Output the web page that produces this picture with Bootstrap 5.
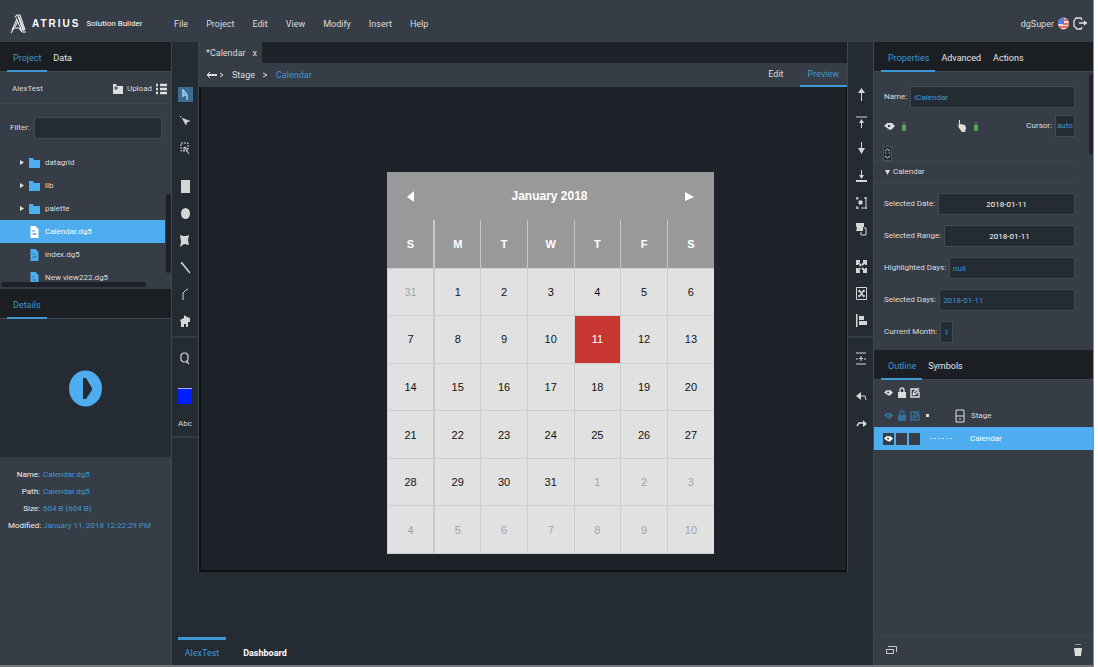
<!DOCTYPE html>
<html lang="en">
<head>
<meta charset="utf-8">
<meta name="viewport" content="width=device-width, initial-scale=1">
<title>Atrius Solution Builder</title>
<link rel="stylesheet" href="https://cdn.jsdelivr.net/npm/bootstrap@5.3.0/dist/css/bootstrap.min.css">
<style>
:root{--panel:#363d46;--deep:#252b32;--black:#1b1e23;--canvas:#1e2229;--line:#3c4853;--blue:#4dadee;--link:#3f97d3;--ink:#dcdcdc}
body{font-family:Roboto,"Open Sans",sans-serif;font-size:9px;line-height:14px;color:var(--ink);background:#fff;height:100vh;overflow:hidden;padding:0 4px 0 0}
a{color:inherit;text-decoration:none}
button{border:0;background:none;color:inherit;padding:0;font:inherit}
svg{display:block;flex:none}
.frame{background:var(--deep);border-right:1px solid #8b9096;border-bottom:2px solid #73777c;height:100vh}
.topbar{height:42px;background:var(--panel);padding:5px 6px 0 10px}
.brand{width:164px}
.menu{gap:18px}
.logotype{font:bold 10px/14px "Liberation Sans",sans-serif;color:#fff;margin:0 6px 0 5px;letter-spacing:2px}
.side-l{width:172px;border-right:1px solid var(--line)}
.side-r{width:220px;border-left:1px solid var(--line);background:var(--panel)}
.tabs{height:30px;background:var(--black);border-bottom:1px solid var(--line);padding-left:7px}
.tabs button{padding:3px 6px 0;border-bottom:2px solid transparent;color:#e6e6e6;margin-bottom:-1px}
.tabs .wide{padding:3px 6px 0 7px}
.tabs .on{color:var(--link);border-color:var(--link)}
.sm8{font-size:8px;line-height:12px}
.grey{background:var(--panel)}
.subhead{height:32px;border-bottom:1px solid var(--line);padding:2px 4px 0 12px}
.filter{padding:13px 9px 12px 10px}
.field{background:var(--deep);border:1px solid #414b56;color:var(--link);height:22px;min-width:0;padding:0 3px;font-size:8px;outline:0;border-radius:0}
.tree{height:138px}
.tree li{height:23px;margin-right:6px;padding-left:19px;gap:5px}
.tree .twisty{width:5px;height:5px}
.tree .sel{background:var(--blue);color:#fff}
.vbar{position:absolute;right:0;top:43px;width:5px;height:79px;border-radius:3px;background:#1d2127}
.hbar{position:absolute;left:1px;bottom:2px;width:145px;height:5px;border-radius:3px;background:#1d2127}
.preview{height:138px;background:var(--deep)}
.meta-list{padding:10px 0 0 8px;background:var(--panel)}
.meta-list dl{display:grid;grid-template-columns:32px 1fr;column-gap:3px;row-gap:1px;margin:0;line-height:16px}
.meta-list dt{text-align:right;font-weight:400;color:#f0f0f0}
.meta-list dd{margin:0;color:var(--link);white-space:nowrap}
.strip{width:26px;padding-top:39px}
.strip-r{border-left:1px solid var(--line)}
.strip button{width:26px;height:27px;display:flex;align-items:center;justify-content:center;color:#d6d6d6}
.strip .group{border-bottom:2px solid #333c45}
.strip .tall{height:40px;padding-top:8px}
.strip .short{height:24px}
.lgroup1{height:92px}.lgroup2{height:165px}
.rgroup1{height:172px}.rgroup2{height:85px}
.group3{padding-top:7px;height:100px}
.picked{background:#3b6c91;width:15px;height:15px;display:flex;align-items:center;justify-content:center}
.swatch{width:14px;height:16px;background:#001eff;border-top:1px solid #a6acff;display:block}
.files{height:21px;background:var(--canvas)}
.files button{padding:0 5px 0 7px;background:var(--panel);gap:7px}
.crumbs{height:24px;background:var(--panel);padding-left:7px}
.crumbs nav{gap:8px}
.crumbs nav .here{color:var(--link)}
.crumbs .mode{padding:0 8px;height:24px;border-bottom:2px solid transparent}
.crumbs .on{color:var(--link);border-color:var(--link)}
.stage{background:var(--canvas);border:solid #0d0f12;border-width:0 1px 2px 2px;padding:85px 0 0 186px}
.main-col{border-left:1px solid var(--line)}
.cal{width:327px;font:12px/16px "Liberation Sans",sans-serif;background:#999}
.cal-title{height:48px;color:#fff;font-weight:bold;padding:0 20px}
.cal table{width:100%;height:334px;table-layout:fixed;border-collapse:collapse;text-align:center;color:#111;font-size:11px}
.cal th{height:48px;color:#fff;border-left:1px solid #c6c6c6;vertical-align:middle;font-weight:bold}
.cal th:first-child{border-left:0}
.cal td{background:#e1e1e1;border:1px solid #cecece;border-width:1px 0 1px 1px;padding:0}
.cal th:nth-child(2),.cal td:nth-child(2){border-left:2px solid #cacaca}
.cal td.out{color:#a3a3a3}
.cal td.today{background:#c83732;color:#fff}
.dock{height:93px;padding-left:6px}
.dock button{min-width:48px;height:28px;border-top:3px solid transparent;color:#fff}
.dock .on{border-color:var(--link);color:var(--link)}
.dock .other{font-weight:bold;margin-left:15px}
.props{height:278px;overflow:hidden;font-size:8px;padding:9px 18px 0 0}
.props .prow{height:32px;padding-left:10px;gap:3px}
.props .flags{height:26px}
.props .step{height:22px}
.props .month{width:13px}
.props .sect{height:22px;border:solid var(--line);border-width:1px 0;padding-left:11px;font-size:8px;gap:3px;margin-bottom:5px}
.props .thumb{position:absolute;right:0;top:2px;width:4px;height:81px;border-radius:3px;background:#20252b}
.led{width:4px;height:9px;background:#5da54c;border-top:3px solid #4a5357}
.autosel{appearance:none;width:20px;padding:0 1px}
.spin{width:9px;height:15px;background:var(--deep);border:1px solid #48525b;margin:7px 0 0 9px;justify-content:center}
.outline{padding-top:1px}
.orow{height:23px;padding-left:9px;gap:2px}
.orow.sel{background:var(--blue);color:#fff}
.cellbox{width:11px;height:12px;background:var(--panel);display:flex;align-items:center;justify-content:center}
.dim{color:#356f9b}
.foot{height:29px;border-top:1px solid var(--line);padding:0 11px 3px 12px}
</style>
</head>
<body>
<svg width="0" height="0" class="position-absolute" aria-hidden="true">
<symbol id="eye" viewBox="0 0 11 9"><path d="M0 4 3 1h5l3 3-3 3-2 1-3-2z" fill="currentColor"/><path d="M4 3h2v2H4z" fill="#363d46"/></symbol>
<symbol id="lock" viewBox="0 0 8 12"><path d="M2 6V3q0-2 2-2t2 2v3" fill="none" stroke="currentColor" stroke-width="1.3"/><path d="M0 5h8v6H0z" fill="currentColor"/></symbol>
<symbol id="pen" viewBox="0 0 10 11"><path d="M7 2H1v8h8V5M3 8l1-3 5-4M3 8l3-1 3-4" fill="none" stroke="currentColor" stroke-width="1.4"/></symbol>
<symbol id="folder" viewBox="0 0 11 10"><path d="M0 0h4l1 2h6v8H0z" fill="#4dadee"/></symbol>
<symbol id="doc" viewBox="0 0 8 12"><path d="M0 0h5l3 3v9H0z" fill="currentColor"/><path d="M2 8h4M2 5h2" stroke="#2b6f9f" stroke-width="1"/></symbol>
<symbol id="twist" viewBox="0 0 5 5"><path d="M1 0 5 2.500 1 5z" fill="#ddd"/></symbol>
</svg>
<div class="frame d-flex flex-column">
<header class="topbar d-flex align-items-center">
 <a href="#" class="brand d-flex align-items-center flex-shrink-0">
  <svg width="17" height="21" viewBox="0 0 17 21" fill="none" stroke="#eee" stroke-width="1.100"><path d="M5 4 7 2h3l5 15M6 5l6 13M9 4l5 14M2 17l5-11M5 14l3-6M1 20l3-5M3 15h6l3 4M12 19h4M8 3l5 14"/></svg>
  <span class="logotype">ATRIUS</span><span class="text-white sm8">Solution Builder</span></a>
 <nav class="menu d-flex flex-grow-1"><a href="#">File</a><a href="#">Project</a><a href="#">Edit</a><a href="#">View</a><a href="#">Modify</a><a href="#">Insert</a><a href="#">Help</a></nav>
 <div class="d-flex align-items-center gap-1"><span>dgSuper</span>
  <svg width="11" height="13" viewBox="0 0 11 13"><clipPath id="fl"><ellipse cx="5.500" cy="6.500" rx="5.500" ry="6"/></clipPath><g clip-path="url(#fl)"><path d="M0 0h11v13H0z" fill="#f3dcd8"/><path d="M5 3h6M5 7h6M1 10h10" stroke="#e26d5c" stroke-width="2"/><path d="M0 0h6v7H0z" fill="#4d7ee2"/></g></svg>
  <button aria-label="Sign out"><svg width="14" height="14" viewBox="0 0 14 14" fill="none" stroke="#e3e3e3" stroke-width="1.300"><path d="M9 3 8 1H3L1 4v5l3 3h4l1-2M6 6h8M11 4l2 2-2 2"/></svg></button></div>
</header>
<div class="d-flex flex-grow-1 overflow-hidden">
<aside class="side-l d-flex flex-column flex-shrink-0 grey">
 <div class="tabs d-flex flex-shrink-0"><button class="on">Project</button><button>Data</button></div>
 <div class="subhead d-flex align-items-center"><span class="flex-grow-1 sm8">AlexTest</span>
  <button class="d-flex align-items-center gap-1 sm8"><svg width="10" height="11" viewBox="0 0 10 11"><path d="M0 1h3l1 2h6v8H0z" fill="#ddd"/><path d="M1 5h4M3 3v4" stroke="#363d46"/></svg>Upload</button>
  <button class="ms-1" aria-label="List view"><svg width="11" height="12" viewBox="0 0 11 12" stroke="#ddd" stroke-width="2.500"><path d="M0 2h2M4 2h7M0 6h2M4 6h7M0 10h2M4 10h7"/></svg></button></div>
 <div class="filter d-flex align-items-center gap-1"><label for="flt" class="sm8">Filter:</label><input id="flt" class="field flex-grow-1"></div>
 <div class="position-relative overflow-hidden flex-shrink-0">
  <ul class="tree list-unstyled m-0 sm8">
   <li class="d-flex align-items-center"><svg class="twisty"><use href="#twist"/></svg><svg width="11" height="10"><use href="#folder"/></svg><span>datagrid</span></li>
   <li class="d-flex align-items-center"><svg class="twisty"><use href="#twist"/></svg><svg width="11" height="10"><use href="#folder"/></svg><span>lib</span></li>
   <li class="d-flex align-items-center"><svg class="twisty"><use href="#twist"/></svg><svg width="11" height="10"><use href="#folder"/></svg><span>palette</span></li>
   <li class="sel d-flex align-items-center"><span class="twisty"></span><svg width="11" height="12" color="#fff"><use href="#doc"/></svg><span>Calendar.dg5</span></li>
   <li class="d-flex align-items-center"><span class="twisty"></span><svg width="11" height="12" color="#4dadee"><use href="#doc"/></svg><span>index.dg5</span></li>
   <li class="d-flex align-items-center"><span class="twisty"></span><svg width="11" height="12" color="#4dadee"><use href="#doc"/></svg><span>New view222.dg5</span></li>
  </ul><div class="vbar"></div><div class="hbar"></div></div>
 <div class="tabs d-flex flex-shrink-0"><button class="on">Details</button></div>
 <div class="preview d-flex align-items-center justify-content-center"><button aria-label="Play"><svg width="33" height="37" viewBox="0 0 33 37"><ellipse cx="16.500" cy="18.500" rx="16.500" ry="18" fill="#4dadee"/><path d="M14 8h3l6 10v2l-6 9h-3z" fill="#252b32"/></svg></button></div>
 <div class="meta-list flex-grow-1 sm8"><dl><dt>Name:</dt><dd>Calendar.dg5</dd><dt>Path:</dt><dd>Calendar.dg5</dd><dt>Size:</dt><dd>604 B (604 B)</dd><dt>Modified:</dt><dd>January 11, 2018 12:22:29 PM</dd></dl></div>
</aside>

<div class="d-flex flex-column flex-grow-1">
<div class="d-flex flex-grow-1">
<div class="strip flex-shrink-0">
 <div class="lgroup1"><button aria-label="Select"><span class="picked"><svg width="9" height="12" viewBox="0 0 9 12" fill="none" stroke="#a6d4f2" stroke-width="1.400"><path d="M2 8V1l4 5v5M2 6h3"/></svg></span></button>
 <button aria-label="Direct select"><svg width="10" height="11" viewBox="0 0 10 11" stroke="currentColor" fill="currentColor"><path d="M0 0h1v1H0zM2 2l4 7 1-3 3-1-3-1z" stroke-width=".5"/></svg></button>
 <button aria-label="Marquee"><svg width="10" height="13" viewBox="0 0 10 13" fill="none" stroke="currentColor"><path d="M1 1h7v8H1z" stroke-dasharray="2 1"/><path d="m4 5 5 7M4 5v4M4 5l4 2"/></svg></button></div>
 <div class="lgroup2 group"><button aria-label="Rectangle"><svg width="9" height="13"><path d="M0 0h9v13H0z" fill="currentColor"/></svg></button>
 <button aria-label="Ellipse"><svg width="9" height="11"><ellipse cx="4.500" cy="5.500" rx="4.500" ry="5.500" fill="currentColor"/></svg></button>
 <button aria-label="Polygon"><svg width="10" height="13" viewBox="0 0 10 13"><path d="m0 1 3 1h3l3-1-1 5 1 5-5-1-4 3 1-5z" fill="currentColor"/></svg></button>
 <button aria-label="Line"><svg width="9" height="12" viewBox="0 0 9 12"><path d="m0 0 9 11" stroke="currentColor" stroke-width="1.500"/></svg></button>
 <button aria-label="Path"><svg width="7" height="13" viewBox="0 0 7 13"><path d="M1 12V5l3-3 2-1" stroke="currentColor" fill="none"/></svg></button>
 <button aria-label="Component"><svg width="10" height="13" viewBox="0 0 10 13"><path d="m0 5 4-2V0l3 2 3 1v4H8v5H6V9H4v3H1V7z" fill="currentColor"/></svg></button></div>
 <div class="group3 group"><button aria-label="Zoom"><svg width="10" height="13" viewBox="0 0 10 13" fill="none" stroke="currentColor" stroke-width="1.200"><path d="M3 1h3l2 2v5l-2 2H3L1 8V3zM6 9l3 3"/></svg></button>
 <button class="tall" aria-label="Fill"><span class="swatch"></span></button><button class="sm8 short">Abc</button></div>
</div>

<main class="main-col d-flex flex-column flex-grow-1">
 <div class="files d-flex"><button class="d-flex align-items-center"><span>*Calendar</span><span>x</span></button></div>
 <div class="crumbs d-flex align-items-center"><nav class="d-flex align-items-center flex-grow-1"><a href="#" aria-label="Back"><svg width="18" height="8" viewBox="0 0 18 8" fill="none" stroke="#ddd"><path d="M1 4h10" stroke-width="2"/><path d="M4 1 1 4l3 3M14 2l3 2-3 2"/></svg></a><a href="#">Stage</a><svg width="5" height="6"><path d="m0 1 4 2-4 2" fill="none" stroke="#ddd"/></svg><a href="#" class="here">Calendar</a></nav>
 <button class="mode me-2">Edit</button><button class="mode on">Preview</button></div>
 <div class="stage flex-grow-1"><div class="cal">
  <div class="cal-title d-flex align-items-center justify-content-between"><button aria-label="Previous month"><svg width="7" height="11"><path d="M7 0v11L0 6z" fill="#fff"/></svg></button><span>January 2018</span><button aria-label="Next month"><svg width="9" height="9"><path d="M0 0v9l9-4z" fill="#fff"/></svg></button></div>
  <table><thead><tr><th>S</th><th>M</th><th>T</th><th>W</th><th>T</th><th>F</th><th>S</th></tr></thead><tbody>
  <tr><td class="out">31</td><td>1</td><td>2</td><td>3</td><td>4</td><td>5</td><td>6</td></tr>
  <tr><td>7</td><td>8</td><td>9</td><td>10</td><td class="today">11</td><td>12</td><td>13</td></tr>
  <tr><td>14</td><td>15</td><td>16</td><td>17</td><td>18</td><td>19</td><td>20</td></tr>
  <tr><td>21</td><td>22</td><td>23</td><td>24</td><td>25</td><td>26</td><td>27</td></tr>
  <tr><td>28</td><td>29</td><td>30</td><td>31</td><td class="out">1</td><td class="out">2</td><td class="out">3</td></tr>
  <tr><td class="out">4</td><td class="out">5</td><td class="out">6</td><td class="out">7</td><td class="out">8</td><td class="out">9</td><td class="out">10</td></tr>
  </tbody></table></div></div>
</main>

<div class="strip strip-r flex-shrink-0">
 <div class="rgroup1">
 <button aria-label="Bring forward"><svg width="9" height="13" viewBox="0 0 9 13" stroke="currentColor" fill="currentColor"><path d="M4.500 13V2"/><path d="M4.500 0 8 5H1z" stroke="none"/></svg></button>
 <button aria-label="Bring to front"><svg width="11" height="12" viewBox="0 0 11 12" stroke="currentColor" fill="currentColor"><path d="M0 1h11M5.500 12V6"/><path d="M5.500 3 8 7H3z" stroke="none"/></svg></button>
 <button aria-label="Send backward"><svg width="9" height="13" viewBox="0 0 9 13" stroke="currentColor" fill="currentColor"><path d="M4.500 0v9"/><path d="M4.500 12 1 6h7z" stroke="none"/></svg></button>
 <button aria-label="Send to back"><svg width="11" height="12" viewBox="0 0 11 12" stroke="currentColor" fill="currentColor"><path d="M0 11h11" stroke-width="2"/><path d="M5.500 0v6"/><path d="M5.500 9 3 5h5z" stroke="none"/></svg></button>
 <button aria-label="Group"><svg width="11" height="12" viewBox="0 0 11 12" fill="none" stroke="currentColor"><path d="M0 1h3M8 1h3M1 0v3M10 0v12M0 11h3M1 9v3M5 11h6"/><path d="M3 4h3v3H3z" fill="currentColor"/></svg></button>
 <button aria-label="Ungroup"><svg width="11" height="13" viewBox="0 0 11 13" fill="none" stroke="currentColor"><path d="M0 0h8v3L7 5v3H0l1-3-1-2z" fill="currentColor" stroke="none"/><path d="M8 5h2v7H5V9"/></svg></button></div>
 <div class="rgroup2 group">
 <button aria-label="Fit"><svg width="11" height="13" viewBox="0 0 11 13" fill="none" stroke="currentColor" stroke-width="2"><path d="M1 5V1h3M7 1h3v4M1 8v4h3M7 12h3V8M2 2l3 4M9 2 6 5M2 11l2-3M9 11 6 8"/></svg></button>
 <button aria-label="Fit selection"><svg width="11" height="13" viewBox="0 0 11 13" fill="none" stroke="currentColor"><path d="M.5.500h10v12H.5z"/><path d="m3 3 5 7M8 3 3 10M3 3v2M8 3v2M3 10V8M8 10V8" stroke-width="1.500"/></svg></button>
 <button aria-label="Align left"><svg width="11" height="13" viewBox="0 0 11 13" fill="currentColor"><path d="M0 0h1.500v13H0zM3 2h5v4H3zM3 7h8v4H3z"/></svg></button></div>
 <div class="group3"><button aria-label="Distribute"><svg width="10" height="13" viewBox="0 0 10 13" stroke="currentColor"><path d="M0 1h10M0 12h10M0 7h2M8 7h2M3 6.500h4M5 4v5"/></svg></button>
 <button class="tall" aria-label="Undo"><svg width="11" height="8" viewBox="0 0 11 8" fill="none" stroke="currentColor"><path d="M5 0v8L0 4z" fill="currentColor" stroke="none"/><path d="M4 4h5l1 4"/></svg></button>
 <button class="short" aria-label="Redo"><svg width="11" height="8" viewBox="0 0 11 8" fill="none" stroke="currentColor"><path d="M7 0v7l4-3z" fill="currentColor" stroke="none"/><path d="M8 3H3L1 6" stroke-width="1.500"/></svg></button></div>
</div>
</div>
<div class="dock d-flex align-items-end flex-shrink-0"><button class="on">AlexTest</button><button class="other">Dashboard</button></div>
</div>

<aside class="side-r d-flex flex-column flex-shrink-0">
 <div class="tabs d-flex flex-shrink-0"><button class="on wide">Properties</button><button>Advanced</button><button>Actions</button></div>
 <div class="props position-relative flex-shrink-0">
  <div class="prow d-flex align-items-center"><label for="nm">Name:</label><input id="nm" class="field flex-grow-1" value="iCalendar"></div>
  <div class="prow flags d-flex align-items-center"><svg width="11" height="9"><use href="#eye"/></svg><span class="led ms-1"></span><svg class="ms-5" width="10" height="13" viewBox="0 0 10 13"><path d="M2 6V0h1v4l5 1 1 3-1 4H5L2 8 0 3z" fill="#ddd"/></svg><span class="led ms-1"></span><label for="cur" class="ms-auto">Cursor:</label><select id="cur" class="field autosel"><option>auto</option></select></div>
  <div class="step d-flex"><button class="spin d-flex align-items-center" aria-label="Step"><svg width="5" height="11" viewBox="0 0 5 11" fill="none" stroke="#ccc"><path d="m0 3 2.500-2L5 3M0 4v2M5 4v2M0 8l2.500 2L5 8"/></svg></button></div>
  <div class="sect d-flex align-items-center"><svg width="5" height="5"><path d="M0 0h5L2.500 5z" fill="#ddd"/></svg>Calendar</div>
  <div class="prow d-flex align-items-center"><label for="p1">Selected Date:</label><input id="p1" class="field flex-grow-1 text-center text-white" value="2018-01-11"></div>
  <div class="prow d-flex align-items-center"><label for="p2">Selected Range:</label><input id="p2" class="field flex-grow-1 text-center text-white" value="2018-01-11"></div>
  <div class="prow d-flex align-items-center"><label for="p3" class="text-nowrap">Highlighted Days:</label><input id="p3" class="field flex-grow-1" value="null"></div>
  <div class="prow d-flex align-items-center"><label for="p4">Selected Days:</label><input id="p4" class="field flex-grow-1" value="2018-01-11"></div>
  <div class="prow d-flex align-items-center"><label for="p5">Current Month:</label><input id="p5" class="field month" value="1"></div>
  <div class="thumb"></div>
 </div>
 <div class="tabs d-flex flex-shrink-0"><button class="on wide">Outline</button><button>Symbols</button></div>
 <div class="outline sm8">
 <div class="orow d-flex align-items-center"><span class="cellbox"><svg width="9" height="8"><use href="#eye"/></svg></span><span class="cellbox"><svg width="8" height="12"><use href="#lock"/></svg></span><span class="cellbox"><svg width="10" height="11"><use href="#pen"/></svg></span></div>
 <div class="orow d-flex align-items-center"><span class="cellbox dim"><svg width="9" height="8"><use href="#eye"/></svg></span><span class="cellbox dim"><svg width="8" height="12"><use href="#lock"/></svg></span><span class="cellbox dim"><svg width="10" height="11"><use href="#pen"/></svg></span><svg class="ms-1" width="3" height="3"><path d="M0 0h3v3H0z" fill="#ddd"/></svg><svg class="ms-4 me-1" width="10" height="14" viewBox="0 0 10 14" fill="none" stroke="#ddd"><path d="M1 1h8v12H1zM1 7h8M5 9v2"/></svg><span>Stage</span></div>
 <div class="orow sel d-flex align-items-center"><span class="cellbox"><svg width="9" height="8"><use href="#eye"/></svg></span><span class="cellbox"></span><span class="cellbox"></span><svg class="ms-2 me-3" width="22" height="1"><path d="M0 .5h22" stroke="#bfe1f8" stroke-dasharray="2 2"/></svg><span>Calendar</span></div>
 </div>
 <div class="foot mt-auto d-flex align-items-center justify-content-between"><button aria-label="Windows"><svg width="11" height="10" viewBox="0 0 11 10" fill="none" stroke="#ccc"><path d="M.5 4.500h7v4h-7zM2 1.500h8.500V7"/></svg></button><button aria-label="Delete"><svg width="8" height="12" viewBox="0 0 8 12"><path d="M1 0h6v1H1z" fill="#999"/><path d="M0 4h8L7 12H1z" fill="#ddd"/></svg></button></div>
</aside>
</div>
</div>
<script src="https://cdn.jsdelivr.net/npm/bootstrap@5.3.0/dist/js/bootstrap.bundle.min.js"></script>
</body>
</html>
